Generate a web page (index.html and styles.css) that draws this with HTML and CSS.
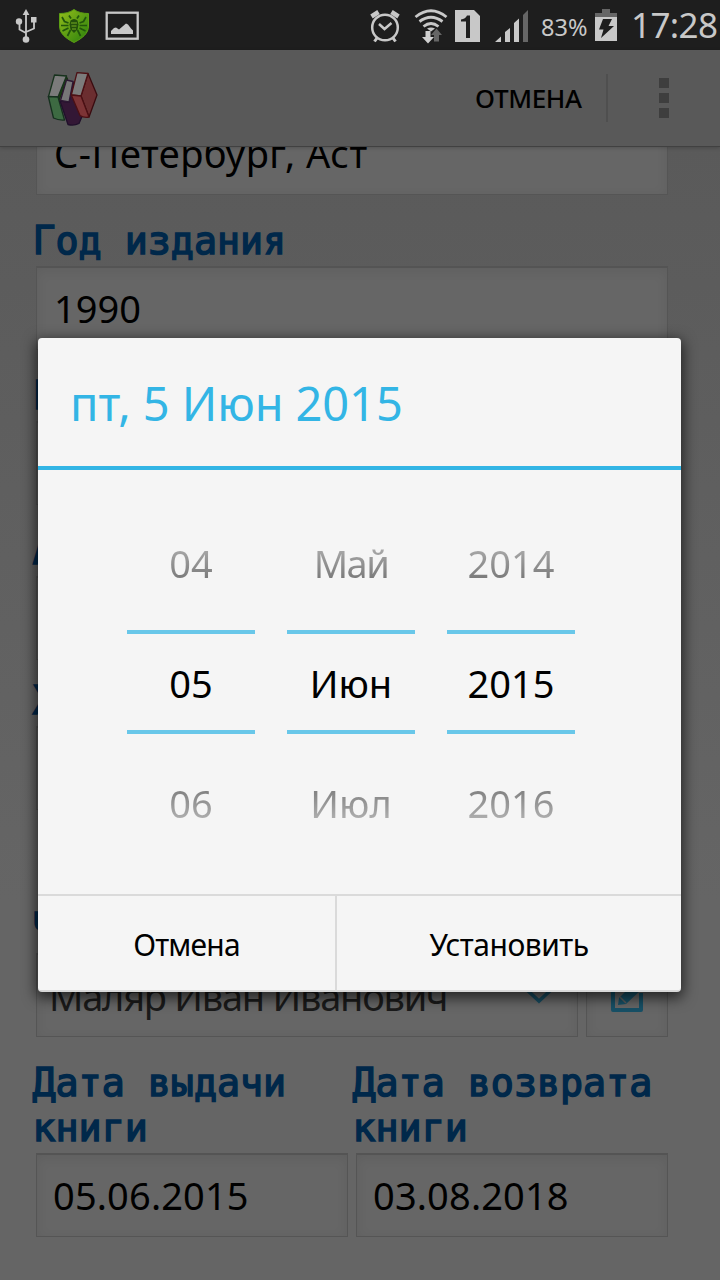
FILE: index.html
```html
<!DOCTYPE html>
<html lang="ru">
<head>
<meta charset="utf-8">
<title>Дата выдачи книги</title>
<link rel="stylesheet" href="styles.css">
</head>
<body>
<div class="screen">
  <header class="status">
    <svg class="status-left" width="150" height="50" viewBox="0 0 150 50">
      <g fill="none" stroke="#c8c8c8" stroke-width="1.8">
        <path d="M26 12V38M26 33L19.5 29.5V22M26 32L34 28.500V20"/>
      </g>
      <g fill="#c8c8c8">
        <path d="M26 9l3.400 6h-6.800z"/><circle cx="19" cy="21.500" r="3.200"/><rect x="31" y="17" width="5.500" height="5.500"/><circle cx="26" cy="39.500" r="3.300"/>
      </g>
      <defs><linearGradient id="sh" x1="0" x2="1" y2="1"><stop stop-color="#94bd1b"/><stop offset="1" stop-color="#277f0c"/></linearGradient></defs>
      <path d="M74 9.500C70 12.500 65 13.500 59.500 13.500V26C59.500 33 65 38 74 42.500C83 38 88.500 33 88.500 26V13.500C83 13.500 78 12.500 74 9.500z" fill="url(#sh)" stroke="#5c9f13"/>
      <g fill="none" stroke="#22560c" stroke-width="1.700">
        <path d="M69 15.500l2 3M79 15.500l-2 3M62 17l2.500 4.500 4 1.500M86 17l-2.500 4.500-4 1.500M61 25.500h7.500M87 25.500h-7.500M62.500 31l6-3M85.500 31l-6-3M67.500 36l3-6M80.500 36l-3-6"/>
      </g>
      <path d="M70.500 20.500q3.500-3 7 0l1 4-1 5-3.500 3.500-3.500-3.500-1-5z" fill="#234f0b"/>
      <path d="M71 23h6M71.500 26h5M72 29h4" stroke="#78ae22" stroke-width="1"/>
      <rect x="106.700" y="12.700" width="31" height="26" fill="none" stroke="#c8c8c8" stroke-width="2.300"/>
      <path d="M111 34v-3l3-3 2-.5 3 2L126 23.500l2 1 3 4 2 2V34z" fill="#c8c8c8"/>
    </svg>
    <div class="status-right">
      <svg width="174" height="50" viewBox="366 0 174 50">
        <g fill="none" stroke="#c8c8c8">
          <circle cx="385" cy="27.500" r="12.800" stroke-width="2.500"/>
          <path d="M379 24l5.500 5 7-6" stroke-width="2.500"/>
          <path d="M371.500 16.500l7-4.500M398.500 16.500l-7-4.500" stroke-width="4.500"/>
          <path d="M377 38l-2.500 3.500M393 38l2.500 3.500" stroke-width="3"/>
          <path d="M415.500 17Q431 4.500 446.500 17" stroke-width="2.800"/>
          <path d="M419.500 21.500Q431 13 442.500 21.500" stroke-width="2.800"/>
          <path d="M423.500 26.500Q431 20.500 438.500 26.500" stroke-width="2.800"/>
        </g>
        <path d="M427 28.500q4-2 8 0l-4 3z" fill="#c8c8c8"/>
        <path d="M425.500 31h5v6h3.500l-6 6.500-6-6.500h3.500z" fill="#d0d0d0"/>
        <path d="M434 41.500h5v-6.500h3l-5.500-6.500-5.500 6.500h3z" fill="#666"/>
        <path d="M455 10h19l6 6v26h-25z" fill="#c8c8c8"/>
        <path d="M461 19.500q4.500-.5 6-4H470V38h-4V21.500h-5z" fill="#1e1e1e"/>
        <path d="M495 42l6-5.500V42zM505 42V32l5-4v14zM514 42V23l5-4.500V42z" fill="#c8c8c8"/>
        <path d="M523 42V15l5-5v32z" fill="#666"/>
      </svg>
      <span class="percent">83%</span>
      <svg class="battery" width="22" height="34" viewBox="0 0 22 34">
        <path d="M0 9V4h7V0h8v4h7v5z" fill="#666"/><path d="M0 8h22v24H0z" fill="#c8c8c8"/>
        <path d="M8 10h9l-3.500 7H19L6 29l2.500-8.500H4z" fill="#1e1e1e"/>
      </svg>
      <span class="clock">17:28</span>
    </div>
  </header>

  <nav class="actionbar">
    <svg class="logo" width="54" height="58" viewBox="45 69 54 58">
      <g stroke-linejoin="round" stroke-width="1.300">
        <path d="M66 76l1.500 3-8.500 21-1-3z" fill="#1f4315" stroke="#162f12"/>
        <path d="M54.500 75l12 1L58 97l-9.500-.5z" fill="#7b7b7b" stroke="#17321d"/>
        <path d="M48.300 96.500L58 97l6.500 23q-6 .5-11-2z" fill="#3d6a42" stroke="#16301f"/>
        <path d="M73 82l10 32-4 9.500q-5 2.500-11 1l-8-23.500 9 1z" fill="#331735" stroke="#20102b"/>
        <path d="M66.500 80l6.500 1.500L69 102l-8.500-1.500z" fill="#777" stroke="#2d1833"/>
        <path d="M88 73.500l9 21.500-8 22-8-21z" fill="#6b2e30" stroke="#3a0c10"/>
        <path d="M77 72.700l11 .8L81 96l-9.700-1z" fill="#7c7c7c" stroke="#4c1014"/>
        <path d="M71.300 95l9.700 1 8 21q-5 1-9-1.500z" fill="#7d3436" stroke="#4c1014"/>
      </g>
    </svg>
    <span class="cancel">ОТМЕНА</span>
    <i class="separator"></i>
    <span class="more"><i></i><i></i><i></i></span>
  </nav>

  <main class="form">
    <div class="field first">С-Петербург, Аст</div>
    <div class="label">Год издания</div>
    <div class="field">1990</div>
    <div class="label">Г</div>
    <div class="field"></div>
    <div class="label">А</div>
    <div class="field"></div>
    <div class="label tight">Х</div>
    <div class="field"></div>
    <div class="label reader">Ч</div>
    <div class="row">
      <div class="field select"><span>Маляр Иван Иванович</span>
        <svg width="30" height="16" viewBox="0 0 30 16"><path d="M2 1l13 12L28 1" fill="none" stroke="#174b5f" stroke-width="3.500"/></svg>
      </div>
      <div class="field edit">
        <svg width="34" height="34" viewBox="0 0 34 34"><path d="M22 4H3v27h28V14" fill="none" stroke="#175066" stroke-width="4" stroke-linejoin="round"/><path d="M8 26l1-7L25 3l7 7-16 15z" fill="#175066"/><path d="M10 18l6 6" stroke="#5c5c5c" stroke-width="1.500"/></svg>
      </div>
    </div>
    <div class="row">
      <div class="column"><div class="label">Дата выдачи<br>книги</div><div class="field date">05.06.2015</div></div>
      <div class="column"><div class="label">Дата возврата<br>книги</div><div class="field date">03.08.2018</div></div>
    </div>
  </main>

  <section class="dialog">
    <h1>пт, 5 Июн 2015</h1>
    <div class="picker">
      <div class="wheel"><span class="prev">04</span><span class="current">05</span><span class="next">06</span></div>
      <div class="wheel"><span class="prev may">Май</span><span class="current">Июн</span><span class="next">Июл</span></div>
      <div class="wheel"><span class="prev">2014</span><span class="current">2015</span><span class="next">2016</span></div>
    </div>
    <div class="buttons"><span class="btn-cancel">Отмена</span><span class="btn-set">Установить</span></div>
  </section>
</div>
</body>
</html>
```
FILE: styles.css
```css
* { box-sizing: border-box; }
body { margin: 0; font-family: "Noto Sans", sans-serif; }
.screen { position: relative; width: 720px; height: 1280px; overflow: hidden; display: flex; flex-direction: column; background: linear-gradient(#5a5a5a 147px, #656565 900px); }

.status { height: 50px; flex: none; display: flex; justify-content: space-between; background: #1e1e1e; color: #c8c8c8; }
.status-right { display: flex; align-items: center; }
.percent { font-size: 23.500px; width: 55px; padding: 3px 0 0 1px; }
.battery { margin-top: 2px; }
.clock { width: 103px; padding-left: 14px; font-size: 35px; letter-spacing: -.6px; line-height: 48px; white-space: nowrap; }

.actionbar { position: relative; height: 97px; flex: none; display: flex; align-items: center; padding-left: 45px; background: #595959; border-bottom: 1px solid #414141; box-shadow: 0 1px 4px rgba(0,0,0,.2); z-index: 1; }
.logo { margin-right: 376px; }
.cancel { width: 131px; margin-top: -1px; font-size: 26px; font-weight: 500; letter-spacing: -.4px; color: #000; }
.separator { width: 2px; height: 48px; background: #4f4f4f; }
.more { display: grid; gap: 5px; margin: -1px 0 0 51px; }
.more i { width: 10px; height: 10px; background: #3e3e3e; }

.form { width: 632px; margin-left: 36px; flex: 1; }
.field { height: 84px; display: flex; align-items: center; padding: 0 0 1px 17px; border: 1px solid #555; border-top: 2px solid #545454; background: #666; box-shadow: inset 0 3px 12px rgba(0,0,0,.07); font-size: 38px; color: #000; white-space: nowrap; }
.first { margin-top: -36px; letter-spacing: .5px; }
.date { padding-left: 16px; letter-spacing: .15px; }
.label { margin-left: -3.500px; padding: 23px 0 3px; font-family: "DejaVu Sans Mono", monospace; font-size: 38.300px; line-height: 45px; color: #00284a; -webkit-text-stroke: 1.500px #00284a; white-space: nowrap; }
.tight { padding-top: 18px; }
.reader { padding-top: 95px; }
.row { display: flex; gap: 8px; }
.column { width: 312px; }
.select { width: 542px; justify-content: space-between; padding: 0 23px 0 12px; letter-spacing: -1.25px; color: #1a1a1a; }
.edit { width: 82px; justify-content: center; padding: 0; }

.dialog { position: absolute; left: 38px; top: 338px; width: 643px; height: 654px; z-index: 2; background: #f5f5f5; border-radius: 4px; border-bottom: 2px solid #d8d8d8; box-shadow: 0 4px 14px 2px rgba(0,0,0,.65); }
h1 { margin: 0; height: 132px; padding: 1px 0 0 32px; border-bottom: 4px solid #33b5e5; font-size: 47px; line-height: 129px; font-weight: 400; letter-spacing: -.1px; color: #33b5e5; white-space: nowrap; }
.picker { height: 424px; display: flex; gap: 32px; padding: 32px 0 0 89px; }
.wheel { width: 128px; display: flex; flex-direction: column; font-size: 38px; line-height: 122px; text-align: center; }
.wheel span { height: 120px; }
.wheel .current { height: 104px; margin: 8px 0; line-height: 98px; border: solid #69c7e9; border-width: 4px 0; color: #000; }
.prev, .next { color: transparent; background-clip: text; -webkit-background-clip: text; }
.prev { background-image: linear-gradient(#ccc 20%, #666 75%); }
.next { background-image: linear-gradient(#666 25%, #ccc 80%); }
.may { letter-spacing: -1.500px; }
.buttons { height: 98px; display: flex; border-top: 2px solid #dadada; font-size: 30px; line-height: 98px; text-align: center; letter-spacing: -.8px; color: #000; }
.btn-cancel { width: 299px; border-right: 2px solid #dadada; }
.btn-set { flex: 1; letter-spacing: -.5px; }
```
